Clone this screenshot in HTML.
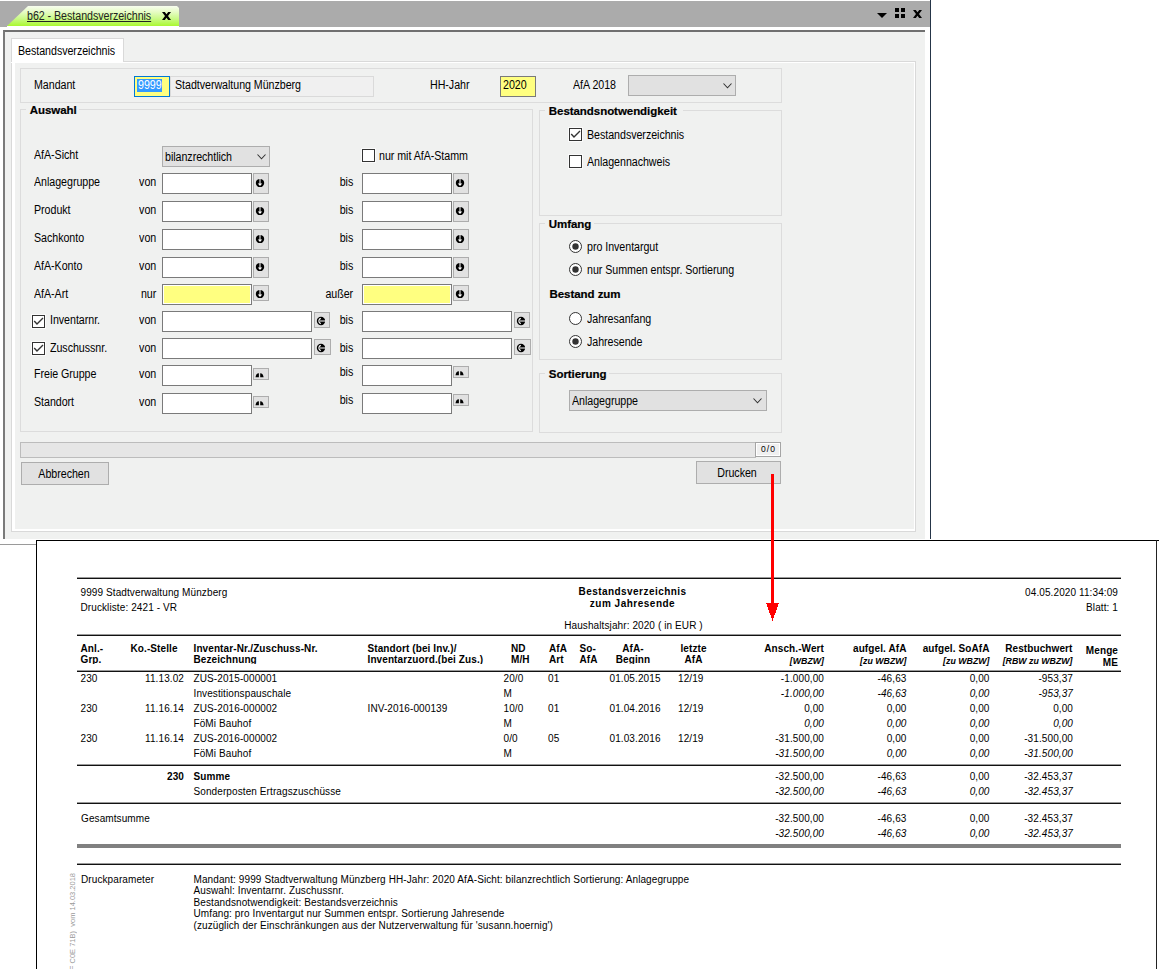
<!DOCTYPE html><html><head><meta charset="utf-8"><style>
*{margin:0;padding:0;box-sizing:border-box}
html,body{width:1159px;height:969px;overflow:hidden;background:#fff;position:relative}
body>div,body>svg{position:absolute}
.f{font:12px/13px "Liberation Sans",sans-serif;letter-spacing:-0.05px;transform:scaleX(0.89);color:#000;white-space:nowrap}
.fb{font:bold 11.5px/13px "Liberation Sans",sans-serif;letter-spacing:-0.05px;-webkit-text-stroke:0.2px #000;color:#000;white-space:nowrap}
.r{font:10px/12px "Liberation Sans",sans-serif;letter-spacing:0.1px;color:#000;white-space:nowrap}
.rb{font:bold 10px/12px "Liberation Sans",sans-serif;letter-spacing:0.1px;color:#000;white-space:nowrap}
.ri{font:italic 10px/12px "Liberation Sans",sans-serif;letter-spacing:0.1px;color:#000;white-space:nowrap}
.rs{font:bold italic 8.8px/10px "Liberation Sans",sans-serif;color:#000;white-space:nowrap}
.inp{background:#fff;border:1px solid #7a7a7a}
.btn{background:#e1e1e1;border:1px solid #adadad}
.grp{border:1px solid #dcdcdc}
</style></head><body>
<div style="left:0px;top:1px;width:930px;height:26px;background:#ababab"></div>
<svg style="left:0;top:0" width="200" height="30"><defs><linearGradient id="g" x1="0" y1="0" x2="0" y2="1"><stop offset="0" stop-color="#f8fdf0"/><stop offset="0.3" stop-color="#e6fcc4"/><stop offset="0.62" stop-color="#cbfa8a"/><stop offset="1" stop-color="#aaf830"/></linearGradient></defs><polygon points="7,26 28,6 177,6 179,8 179,26" fill="url(#g)"/></svg>
<div class="f" style="left:27px;top:10px;transform-origin:0 0;color:#222;text-decoration:underline">b62 - Bestandsverzeichnis</div>
<svg style="left:162px;top:12px" width="9" height="8"><polygon points="0,0 2.8,0 4.5,2.3 6.2,0 9,0 6,4 9,8 6.2,8 4.5,5.7 2.8,8 0,8 3,4" fill="#000"/></svg>
<svg style="left:876px;top:8px" width="50" height="12"><polygon points="1,5 11,5 6,10" fill="#000"/><rect x="19" y="0" width="4" height="4" fill="#000"/><rect x="25" y="0" width="4" height="4" fill="#000"/><rect x="19" y="6" width="4" height="4" fill="#000"/><rect x="25" y="6" width="4" height="4" fill="#000"/><polygon transform="translate(37,2)" points="0,0 2.8,0 4.5,2.3 6.2,0 9,0 6,4 9,8 6.2,8 4.5,5.7 2.8,8 0,8 3,4" fill="#000"/></svg>
<div style="left:930px;top:0px;width:1px;height:539px;background:#253548"></div>
<div style="left:7px;top:26px;width:172px;height:1px;background:#fff"></div>
<div style="left:3px;top:30px;width:922px;height:509px;background:#f0f1f0;border-left:2px solid #7a7a7a;border-top:2px solid #707070"></div>
<div style="left:0px;top:544px;width:36px;height:1px;background:#9a9a9a"></div>
<div style="left:11px;top:38px;width:113px;height:25px;background:#fff;border:1px solid #d9d9d9;border-bottom:none"></div>
<div style="left:11px;top:61px;width:905px;height:471px;border:1px solid #d9d9d9;border-top:none"></div>
<div style="left:123px;top:61px;width:793px;height:1px;background:#d9d9d9"></div>
<div style="left:12px;top:62px;width:903px;height:469px;border:solid #fff;border-width:1px 1px 2px 3px"></div>
<div style="left:12px;top:62px;width:111px;height:1px;background:#fff"></div>
<div class="f" style="left:17.8px;top:45.00px;transform-origin:0 0;">Bestandsverzeichnis</div>
<div style="left:11px;top:62px;width:1px;height:1px;background:#fff"></div>
<div style="left:20px;top:68px;width:762px;height:35px;"></div>
<div class="grp" style="left:20px;top:68px;width:762px;height:35px"></div>
<div class="f" style="left:34.3px;top:79.00px;transform-origin:0 0;">Mandant</div>
<div style="left:134px;top:76px;width:36px;height:21px;background:#ffff80;border:1px solid #0078d7"></div>
<div style="left:137px;top:79px;width:25px;height:13px;background:#3399ff"></div>
<div class="f" style="left:137.70000000000002px;top:79.00px;transform-origin:0 0;color:#fff">9999</div>
<div style="left:170px;top:76px;width:204px;height:21px;background:#f0f0f0;border:1px solid #dadada"></div>
<div class="f" style="left:174.5px;top:79.00px;transform-origin:0 0;">Stadtverwaltung Münzberg</div>
<div class="f" style="left:430.3px;top:79.00px;transform-origin:0 0;">HH-Jahr</div>
<div style="left:500px;top:76px;width:36px;height:21px;background:#ffff80;border:1px solid #7a7a7a"></div>
<div class="f" style="left:503.3px;top:79.00px;transform-origin:0 0;">2020</div>
<div class="f" style="left:572.8px;top:79.00px;transform-origin:0 0;">AfA 2018</div>
<div style="left:628px;top:75px;width:108px;height:21px;background:#e1e1e1;border:1px solid #adadad"></div>
<svg style="left:723px;top:83px" width="10" height="6"><path d="M0.5,0.5 L4.5,4.8 L8.5,0.5" fill="none" stroke="#333" stroke-width="1.1"/></svg>
<div class="grp" style="left:20px;top:109px;width:513px;height:323px"></div>
<div style="left:26px;top:108px;width:53px;height:3px;background:#f0f1f0"></div>
<div class="fb" style="left:29.8px;top:103.90px;transform-origin:0 0;">Auswahl</div>
<div class="grp" style="left:539px;top:110px;width:243px;height:106px"></div>
<div style="left:545px;top:109px;width:138px;height:3px;background:#f0f1f0"></div>
<div class="fb" style="left:548.8px;top:104.90px;transform-origin:0 0;">Bestandsnotwendigkeit</div>
<div class="grp" style="left:539px;top:223px;width:243px;height:137px"></div>
<div style="left:545px;top:222px;width:49px;height:3px;background:#f0f1f0"></div>
<div class="fb" style="left:548.8px;top:217.90px;transform-origin:0 0;">Umfang</div>
<div class="grp" style="left:539px;top:373px;width:243px;height:60px"></div>
<div style="left:545px;top:372px;width:64px;height:3px;background:#f0f1f0"></div>
<div class="fb" style="left:548.8px;top:367.90px;transform-origin:0 0;">Sortierung</div>
<div class="fb" style="left:549.5px;top:288.00px;transform-origin:0 0;">Bestand zum</div>
<div class="f" style="left:34.3px;top:149.00px;transform-origin:0 0;">AfA-Sicht</div>
<div style="left:162px;top:146px;width:108px;height:21px;background:#e1e1e1;border:1px solid #adadad"></div>
<div class="f" style="left:164.8px;top:151.00px;transform-origin:0 0;">bilanzrechtlich</div>
<svg style="left:257px;top:154px" width="10" height="6"><path d="M0.5,0.5 L4.5,4.8 L8.5,0.5" fill="none" stroke="#333" stroke-width="1.1"/></svg>
<svg style="left:361px;top:148px" width="15" height="15"><rect x="0.5" y="0.5" width="14" height="14" fill="none" stroke="#fff" stroke-width="1" opacity="0.7"/><rect x="1.5" y="1.5" width="12" height="12" fill="#fff" stroke="#333" stroke-width="1"/></svg>
<div class="f" style="left:378.7px;top:150.00px;transform-origin:0 0;">nur mit AfA-Stamm</div>
<div class="f" style="left:34.3px;top:176.00px;transform-origin:0 0;">Anlagegruppe</div>
<div class="f" style="right:1003px;top:176.00px;text-align:right;transform-origin:100% 0;">von</div>
<div class="f" style="right:805.5px;top:176.00px;text-align:right;transform-origin:100% 0;">bis</div>
<div style="left:162px;top:173px;width:90px;height:21px;background:#fff;border:1px solid #7a7a7a"></div>
<div style="left:362px;top:173px;width:90px;height:21px;background:#fff;border:1px solid #7a7a7a"></div>
<div style="left:253px;top:173px;width:16px;height:21px;background:#e1e1e1;border:1px solid #adadad"></div>
<div style="left:453px;top:173px;width:16px;height:21px;background:#e1e1e1;border:1px solid #adadad"></div>
<svg style="left:255px;top:178px" width="10" height="10"><ellipse cx="5" cy="5" rx="4.2" ry="4.1" fill="#000"/><rect x="4.5" y="0.5" width="1" height="5.5" fill="#fff"/><polygon points="2.8,5.6 7.2,5.6 5,7.9" fill="#fff"/></svg>
<svg style="left:455px;top:178px" width="10" height="10"><ellipse cx="5" cy="5" rx="4.2" ry="4.1" fill="#000"/><rect x="4.5" y="0.5" width="1" height="5.5" fill="#fff"/><polygon points="2.8,5.6 7.2,5.6 5,7.9" fill="#fff"/></svg>
<div class="f" style="left:34.3px;top:204.00px;transform-origin:0 0;">Produkt</div>
<div class="f" style="right:1003px;top:204.00px;text-align:right;transform-origin:100% 0;">von</div>
<div class="f" style="right:805.5px;top:204.00px;text-align:right;transform-origin:100% 0;">bis</div>
<div style="left:162px;top:201px;width:90px;height:21px;background:#fff;border:1px solid #7a7a7a"></div>
<div style="left:362px;top:201px;width:90px;height:21px;background:#fff;border:1px solid #7a7a7a"></div>
<div style="left:253px;top:201px;width:16px;height:21px;background:#e1e1e1;border:1px solid #adadad"></div>
<div style="left:453px;top:201px;width:16px;height:21px;background:#e1e1e1;border:1px solid #adadad"></div>
<svg style="left:255px;top:206px" width="10" height="10"><ellipse cx="5" cy="5" rx="4.2" ry="4.1" fill="#000"/><rect x="4.5" y="0.5" width="1" height="5.5" fill="#fff"/><polygon points="2.8,5.6 7.2,5.6 5,7.9" fill="#fff"/></svg>
<svg style="left:455px;top:206px" width="10" height="10"><ellipse cx="5" cy="5" rx="4.2" ry="4.1" fill="#000"/><rect x="4.5" y="0.5" width="1" height="5.5" fill="#fff"/><polygon points="2.8,5.6 7.2,5.6 5,7.9" fill="#fff"/></svg>
<div class="f" style="left:34.3px;top:232.00px;transform-origin:0 0;">Sachkonto</div>
<div class="f" style="right:1003px;top:232.00px;text-align:right;transform-origin:100% 0;">von</div>
<div class="f" style="right:805.5px;top:232.00px;text-align:right;transform-origin:100% 0;">bis</div>
<div style="left:162px;top:229px;width:90px;height:21px;background:#fff;border:1px solid #7a7a7a"></div>
<div style="left:362px;top:229px;width:90px;height:21px;background:#fff;border:1px solid #7a7a7a"></div>
<div style="left:253px;top:229px;width:16px;height:21px;background:#e1e1e1;border:1px solid #adadad"></div>
<div style="left:453px;top:229px;width:16px;height:21px;background:#e1e1e1;border:1px solid #adadad"></div>
<svg style="left:255px;top:234px" width="10" height="10"><ellipse cx="5" cy="5" rx="4.2" ry="4.1" fill="#000"/><rect x="4.5" y="0.5" width="1" height="5.5" fill="#fff"/><polygon points="2.8,5.6 7.2,5.6 5,7.9" fill="#fff"/></svg>
<svg style="left:455px;top:234px" width="10" height="10"><ellipse cx="5" cy="5" rx="4.2" ry="4.1" fill="#000"/><rect x="4.5" y="0.5" width="1" height="5.5" fill="#fff"/><polygon points="2.8,5.6 7.2,5.6 5,7.9" fill="#fff"/></svg>
<div class="f" style="left:34.3px;top:260.00px;transform-origin:0 0;">AfA-Konto</div>
<div class="f" style="right:1003px;top:260.00px;text-align:right;transform-origin:100% 0;">von</div>
<div class="f" style="right:805.5px;top:260.00px;text-align:right;transform-origin:100% 0;">bis</div>
<div style="left:162px;top:257px;width:90px;height:21px;background:#fff;border:1px solid #7a7a7a"></div>
<div style="left:362px;top:257px;width:90px;height:21px;background:#fff;border:1px solid #7a7a7a"></div>
<div style="left:253px;top:257px;width:16px;height:21px;background:#e1e1e1;border:1px solid #adadad"></div>
<div style="left:453px;top:257px;width:16px;height:21px;background:#e1e1e1;border:1px solid #adadad"></div>
<svg style="left:255px;top:262px" width="10" height="10"><ellipse cx="5" cy="5" rx="4.2" ry="4.1" fill="#000"/><rect x="4.5" y="0.5" width="1" height="5.5" fill="#fff"/><polygon points="2.8,5.6 7.2,5.6 5,7.9" fill="#fff"/></svg>
<svg style="left:455px;top:262px" width="10" height="10"><ellipse cx="5" cy="5" rx="4.2" ry="4.1" fill="#000"/><rect x="4.5" y="0.5" width="1" height="5.5" fill="#fff"/><polygon points="2.8,5.6 7.2,5.6 5,7.9" fill="#fff"/></svg>
<div class="f" style="left:34.3px;top:288.00px;transform-origin:0 0;">AfA-Art</div>
<div class="f" style="right:1003px;top:288.00px;text-align:right;transform-origin:100% 0;">nur</div>
<div class="f" style="right:805.5px;top:288.00px;text-align:right;transform-origin:100% 0;">außer</div>
<div style="left:162px;top:284px;width:90px;height:21px;background:#ffff80;border:1px solid #7a7a7a;box-shadow:inset 0 0 0 1px #fff"></div>
<div style="left:362px;top:284px;width:90px;height:21px;background:#ffff80;border:1px solid #7a7a7a;box-shadow:inset 0 0 0 1px #fff"></div>
<div style="left:253px;top:285px;width:16px;height:16px;background:#e1e1e1;border:1px solid #adadad"></div>
<div style="left:453px;top:285px;width:16px;height:16px;background:#e1e1e1;border:1px solid #adadad"></div>
<svg style="left:255px;top:289px" width="10" height="10"><ellipse cx="5" cy="5" rx="4.2" ry="4.1" fill="#000"/><rect x="4.5" y="0.5" width="1" height="5.5" fill="#fff"/><polygon points="2.8,5.6 7.2,5.6 5,7.9" fill="#fff"/></svg>
<svg style="left:455px;top:289px" width="10" height="10"><ellipse cx="5" cy="5" rx="4.2" ry="4.1" fill="#000"/><rect x="4.5" y="0.5" width="1" height="5.5" fill="#fff"/><polygon points="2.8,5.6 7.2,5.6 5,7.9" fill="#fff"/></svg>
<svg style="left:31px;top:314px" width="15" height="15"><rect x="0.5" y="0.5" width="14" height="14" fill="none" stroke="#fff" stroke-width="1" opacity="0.7"/><rect x="1.5" y="1.5" width="12" height="12" fill="#fff" stroke="#333" stroke-width="1"/><path d="M3.2,7 L6,10 L12,4" fill="none" stroke="#333" stroke-width="1.4"/></svg>
<div class="f" style="left:50.3px;top:314.00px;transform-origin:0 0;">Inventarnr.</div>
<div class="f" style="right:1003px;top:314.00px;text-align:right;transform-origin:100% 0;">von</div>
<div class="f" style="right:805.5px;top:314.00px;text-align:right;transform-origin:100% 0;">bis</div>
<div style="left:162px;top:311px;width:150px;height:21px;background:#fff;border:1px solid #7a7a7a"></div>
<div style="left:362px;top:311px;width:150px;height:21px;background:#fff;border:1px solid #7a7a7a"></div>
<div style="left:314px;top:312px;width:16px;height:16px;background:#e1e1e1;border:1px solid #adadad"></div>
<div style="left:514px;top:312px;width:16px;height:16px;background:#e1e1e1;border:1px solid #adadad"></div>
<svg style="left:316px;top:316px" width="10" height="10"><circle cx="5" cy="5" r="4.2" fill="#000"/><path d="M4.8,2.4 A2.7,2.7 0 0 0 4.8,7.6" fill="none" stroke="#fff" stroke-width="1.1"/><rect x="3.8" y="4.5" width="6" height="1" fill="#fff"/></svg>
<svg style="left:516px;top:316px" width="10" height="10"><circle cx="5" cy="5" r="4.2" fill="#000"/><path d="M4.8,2.4 A2.7,2.7 0 0 0 4.8,7.6" fill="none" stroke="#fff" stroke-width="1.1"/><rect x="3.8" y="4.5" width="6" height="1" fill="#fff"/></svg>
<svg style="left:31px;top:341px" width="15" height="15"><rect x="0.5" y="0.5" width="14" height="14" fill="none" stroke="#fff" stroke-width="1" opacity="0.7"/><rect x="1.5" y="1.5" width="12" height="12" fill="#fff" stroke="#333" stroke-width="1"/><path d="M3.2,7 L6,10 L12,4" fill="none" stroke="#333" stroke-width="1.4"/></svg>
<div class="f" style="left:50.3px;top:342.00px;transform-origin:0 0;">Zuschussnr.</div>
<div class="f" style="right:1003px;top:342.00px;text-align:right;transform-origin:100% 0;">von</div>
<div class="f" style="right:805.5px;top:342.00px;text-align:right;transform-origin:100% 0;">bis</div>
<div style="left:162px;top:338px;width:150px;height:21px;background:#fff;border:1px solid #7a7a7a"></div>
<div style="left:362px;top:338px;width:150px;height:21px;background:#fff;border:1px solid #7a7a7a"></div>
<div style="left:314px;top:339px;width:17px;height:16px;background:#e1e1e1;border:1px solid #adadad"></div>
<div style="left:514px;top:339px;width:17px;height:16px;background:#e1e1e1;border:1px solid #adadad"></div>
<svg style="left:316px;top:343px" width="10" height="10"><circle cx="5" cy="5" r="4.2" fill="#000"/><path d="M4.8,2.4 A2.7,2.7 0 0 0 4.8,7.6" fill="none" stroke="#fff" stroke-width="1.1"/><rect x="3.8" y="4.5" width="6" height="1" fill="#fff"/></svg>
<svg style="left:516px;top:343px" width="10" height="10"><circle cx="5" cy="5" r="4.2" fill="#000"/><path d="M4.8,2.4 A2.7,2.7 0 0 0 4.8,7.6" fill="none" stroke="#fff" stroke-width="1.1"/><rect x="3.8" y="4.5" width="6" height="1" fill="#fff"/></svg>
<div class="f" style="left:34.3px;top:368.00px;transform-origin:0 0;">Freie Gruppe</div>
<div class="f" style="right:1003px;top:368.00px;text-align:right;transform-origin:100% 0;">von</div>
<div class="f" style="right:805.5px;top:366.00px;text-align:right;transform-origin:100% 0;">bis</div>
<div style="left:162px;top:365px;width:90px;height:21px;background:#fff;border:1px solid #7a7a7a"></div>
<div style="left:362px;top:365px;width:90px;height:21px;background:#fff;border:1px solid #7a7a7a"></div>
<div style="left:253px;top:368px;width:16px;height:12px;background:#e1e1e1;border:1px solid #adadad"></div>
<div style="left:453px;top:366px;width:16px;height:12px;background:#e1e1e1;border:1px solid #adadad"></div>
<svg style="left:255.2px;top:372.6px" width="10" height="6"><path d="M0.5,4.3 Q0.9,0.4 3.9,0.2 L3.9,4.3 Z M5.2,0.2 Q8.2,0.4 8.6,4.3 L5.2,4.3 Z" fill="#000"/></svg>
<svg style="left:455.2px;top:370.6px" width="10" height="6"><path d="M0.5,4.3 Q0.9,0.4 3.9,0.2 L3.9,4.3 Z M5.2,0.2 Q8.2,0.4 8.6,4.3 L5.2,4.3 Z" fill="#000"/></svg>
<div class="f" style="left:34.3px;top:396.00px;transform-origin:0 0;">Standort</div>
<div class="f" style="right:1003px;top:396.00px;text-align:right;transform-origin:100% 0;">von</div>
<div class="f" style="right:805.5px;top:394.00px;text-align:right;transform-origin:100% 0;">bis</div>
<div style="left:162px;top:393px;width:90px;height:21px;background:#fff;border:1px solid #7a7a7a"></div>
<div style="left:362px;top:393px;width:90px;height:21px;background:#fff;border:1px solid #7a7a7a"></div>
<div style="left:253px;top:396px;width:16px;height:12px;background:#e1e1e1;border:1px solid #adadad"></div>
<div style="left:453px;top:394px;width:16px;height:12px;background:#e1e1e1;border:1px solid #adadad"></div>
<svg style="left:255.2px;top:400.6px" width="10" height="6"><path d="M0.5,4.3 Q0.9,0.4 3.9,0.2 L3.9,4.3 Z M5.2,0.2 Q8.2,0.4 8.6,4.3 L5.2,4.3 Z" fill="#000"/></svg>
<svg style="left:455.2px;top:398.6px" width="10" height="6"><path d="M0.5,4.3 Q0.9,0.4 3.9,0.2 L3.9,4.3 Z M5.2,0.2 Q8.2,0.4 8.6,4.3 L5.2,4.3 Z" fill="#000"/></svg>
<svg style="left:568px;top:127px" width="15" height="15"><rect x="0.5" y="0.5" width="14" height="14" fill="none" stroke="#fff" stroke-width="1" opacity="0.7"/><rect x="1.5" y="1.5" width="12" height="12" fill="#fff" stroke="#333" stroke-width="1"/><path d="M3.2,7 L6,10 L12,4" fill="none" stroke="#333" stroke-width="1.4"/></svg>
<div class="f" style="left:587.3px;top:129.00px;transform-origin:0 0;">Bestandsverzeichnis</div>
<svg style="left:568px;top:154px" width="15" height="15"><rect x="0.5" y="0.5" width="14" height="14" fill="none" stroke="#fff" stroke-width="1" opacity="0.7"/><rect x="1.5" y="1.5" width="12" height="12" fill="#fff" stroke="#333" stroke-width="1"/></svg>
<div class="f" style="left:587.3px;top:156.00px;transform-origin:0 0;">Anlagennachweis</div>
<svg style="left:569px;top:240px" width="13" height="13"><circle cx="6.5" cy="6.5" r="6" fill="#fff" stroke="#333" stroke-width="1"/><circle cx="6.5" cy="6.5" r="3.2" fill="#333"/></svg>
<div class="f" style="left:586.8px;top:241.00px;transform-origin:0 0;">pro Inventargut</div>
<svg style="left:569px;top:263px" width="13" height="13"><circle cx="6.5" cy="6.5" r="6" fill="#fff" stroke="#333" stroke-width="1"/><circle cx="6.5" cy="6.5" r="3.2" fill="#333"/></svg>
<div class="f" style="left:586.8px;top:264.00px;transform-origin:0 0;">nur Summen entspr. Sortierung</div>
<svg style="left:569px;top:312px" width="13" height="13"><circle cx="6.5" cy="6.5" r="6" fill="#fff" stroke="#333" stroke-width="1"/></svg>
<div class="f" style="left:586.8px;top:313.00px;transform-origin:0 0;">Jahresanfang</div>
<svg style="left:569px;top:335px" width="13" height="13"><circle cx="6.5" cy="6.5" r="6" fill="#fff" stroke="#333" stroke-width="1"/><circle cx="6.5" cy="6.5" r="3.2" fill="#333"/></svg>
<div class="f" style="left:586.8px;top:336.00px;transform-origin:0 0;">Jahresende</div>
<div style="left:569px;top:390px;width:198px;height:21px;background:#e1e1e1;border:1px solid #adadad"></div>
<div class="f" style="left:572.3px;top:395.00px;transform-origin:0 0;">Anlagegruppe</div>
<svg style="left:753px;top:398px" width="10" height="6"><path d="M0.5,0.5 L4.5,4.8 L8.5,0.5" fill="none" stroke="#333" stroke-width="1.1"/></svg>
<div style="left:20px;top:442px;width:736px;height:16px;background:#e6e6e6;border:1px solid #bcbcbc"></div>
<div style="left:755px;top:442px;width:26px;height:15px;background:#f0f0f0;border:1px solid #a5a5a5;box-shadow:inset 0 0 0 1px #fff"></div>
<div style="left:755px;top:443px;width:26px;text-align:center;font:8.5px/12px &quot;Liberation Sans&quot;,sans-serif;letter-spacing:1px;text-indent:1px;color:#000">0/0</div>
<div style="left:21px;top:462px;width:88px;height:23px;background:#e1e1e1;border:1px solid #adadad"></div>
<div class="f" style="left:-136.5px;width:400px;top:468.00px;text-align:center;transform-origin:50% 0;">Abbrechen</div>
<div style="left:696px;top:461px;width:85px;height:23px;background:#e1e1e1;border:1px solid #adadad"></div>
<div class="f" style="left:536.5px;width:400px;top:467.00px;text-align:center;transform-origin:50% 0;">Drucken</div>
<div style="left:36px;top:540px;width:1123px;height:429px;background:#fff;border-left:1px solid #000;border-top:1px solid #000"></div>
<div style="left:1156px;top:540px;width:1px;height:429px;background:#222"></div>
<div style="left:77px;top:577px;width:1044px;height:1px;background:#9a9a9a"></div>
<div style="left:77px;top:578px;width:1044px;height:1px;background:#111"></div>
<div class="r" style="left:80.5px;top:587.00px;transform-origin:0 0;">9999 Stadtverwaltung Münzberg</div>
<div class="r" style="left:80.5px;top:602.00px;transform-origin:0 0;">Druckliste: 2421 - VR</div>
<div class="rb" style="left:432.5px;width:400px;top:586.00px;text-align:center;transform-origin:50% 0;letter-spacing:0.45px">Bestandsverzeichnis</div>
<div class="rb" style="left:432.5px;width:400px;top:597.50px;text-align:center;transform-origin:50% 0;letter-spacing:0.5px">zum Jahresende</div>
<div class="r" style="left:433.5px;width:400px;top:619.50px;text-align:center;transform-origin:50% 0;">Haushaltsjahr: 2020 ( in EUR )</div>
<div class="r" style="right:41px;top:587.00px;text-align:right;transform-origin:100% 0;">04.05.2020 11:34:09</div>
<div class="r" style="right:41px;top:602.00px;text-align:right;transform-origin:100% 0;">Blatt: 1</div>
<div style="left:77px;top:634px;width:1044px;height:1px;background:#9a9a9a"></div>
<div style="left:77px;top:635px;width:1044px;height:1px;background:#111"></div>
<div class="rb" style="left:80.5px;top:642.50px;transform-origin:0 0;">Anl.-</div>
<div class="rb" style="left:80.5px;top:653.50px;transform-origin:0 0;">Grp.</div>
<div class="rb" style="left:130.5px;top:642.50px;transform-origin:0 0;">Ko.-Stelle</div>
<div class="rb" style="left:193.5px;top:642.50px;transform-origin:0 0;">Inventar-Nr./Zuschuss-Nr.</div>
<div class="rb" style="left:193.5px;top:653.50px;transform-origin:0 0;">Bezeichnung</div>
<div class="rb" style="left:367.5px;top:642.50px;transform-origin:0 0;">Standort (bei Inv.)/</div>
<div class="rb" style="left:367.5px;top:653.50px;transform-origin:0 0;">Inventarzuord.(bei Zus.)</div>
<div class="rb" style="left:511px;top:642.50px;transform-origin:0 0;">ND</div>
<div class="rb" style="left:511px;top:653.50px;transform-origin:0 0;">M/H</div>
<div class="rb" style="left:549px;top:642.50px;transform-origin:0 0;">AfA</div>
<div class="rb" style="left:549px;top:653.50px;transform-origin:0 0;">Art</div>
<div class="rb" style="left:579.5px;top:642.50px;transform-origin:0 0;">So-</div>
<div class="rb" style="left:579.5px;top:653.50px;transform-origin:0 0;">AfA</div>
<div class="rb" style="left:433px;width:400px;top:642.50px;text-align:center;transform-origin:50% 0;">AfA-</div>
<div class="rb" style="left:433px;width:400px;top:653.50px;text-align:center;transform-origin:50% 0;">Beginn</div>
<div class="rb" style="left:493.5px;width:400px;top:642.50px;text-align:center;transform-origin:50% 0;">letzte</div>
<div class="rb" style="left:493.5px;width:400px;top:653.50px;text-align:center;transform-origin:50% 0;">AfA</div>
<div class="rb" style="right:335px;top:642.50px;text-align:right;transform-origin:100% 0;">Ansch.-Wert</div>
<div class="rs" style="right:335px;top:655.50px;text-align:right;transform-origin:100% 0;">[WBZW]</div>
<div class="rb" style="right:252.5px;top:642.50px;text-align:right;transform-origin:100% 0;">aufgel. AfA</div>
<div class="rs" style="right:252.5px;top:655.50px;text-align:right;transform-origin:100% 0;">[zu WBZW]</div>
<div class="rb" style="right:169.5px;top:642.50px;text-align:right;transform-origin:100% 0;">aufgel. SoAfA</div>
<div class="rs" style="right:169.5px;top:655.50px;text-align:right;transform-origin:100% 0;">[zu WBZW]</div>
<div class="rb" style="right:86.5px;top:642.50px;text-align:right;transform-origin:100% 0;">Restbuchwert</div>
<div class="rs" style="right:86.5px;top:655.50px;text-align:right;transform-origin:100% 0;">[RBW zu WBZW]</div>
<div class="rb" style="right:41px;top:644.50px;text-align:right;transform-origin:100% 0;">Menge</div>
<div class="rb" style="right:41px;top:656.50px;text-align:right;transform-origin:100% 0;">ME</div>
<div style="left:77px;top:670px;width:1044px;height:1px;background:#9a9a9a"></div>
<div style="left:77px;top:671px;width:1044px;height:1px;background:#111"></div>
<div style="left:77px;top:664px;width:663px;height:5px;background:#fff"></div>
<div class="r" style="left:80.5px;top:672.50px;transform-origin:0 0;">230</div>
<div class="r" style="right:975px;top:672.50px;text-align:right;transform-origin:100% 0;">11.13.02</div>
<div class="r" style="left:193.5px;top:672.50px;transform-origin:0 0;">ZUS-2015-000001</div>
<div class="r" style="left:503.5px;top:672.50px;transform-origin:0 0;">20/0</div>
<div class="r" style="left:548px;top:672.50px;transform-origin:0 0;">01</div>
<div class="r" style="left:609.5px;top:672.50px;transform-origin:0 0;">01.05.2015</div>
<div class="r" style="left:678px;top:672.50px;transform-origin:0 0;">12/19</div>
<div class="r" style="right:335px;top:672.50px;text-align:right;transform-origin:100% 0;">-1.000,00</div>
<div class="r" style="right:252.5px;top:672.50px;text-align:right;transform-origin:100% 0;">-46,63</div>
<div class="r" style="right:169.5px;top:672.50px;text-align:right;transform-origin:100% 0;">0,00</div>
<div class="r" style="right:86px;top:672.50px;text-align:right;transform-origin:100% 0;">-953,37</div>
<div class="r" style="left:193.5px;top:687.60px;transform-origin:0 0;">Investitionspauschale</div>
<div class="r" style="left:503.5px;top:687.60px;transform-origin:0 0;">M</div>
<div class="ri" style="right:335px;top:687.60px;text-align:right;transform-origin:100% 0;">-1.000,00</div>
<div class="ri" style="right:252.5px;top:687.60px;text-align:right;transform-origin:100% 0;">-46,63</div>
<div class="ri" style="right:169.5px;top:687.60px;text-align:right;transform-origin:100% 0;">0,00</div>
<div class="ri" style="right:86px;top:687.60px;text-align:right;transform-origin:100% 0;">-953,37</div>
<div class="r" style="left:80.5px;top:702.70px;transform-origin:0 0;">230</div>
<div class="r" style="right:975px;top:702.70px;text-align:right;transform-origin:100% 0;">11.16.14</div>
<div class="r" style="left:193.5px;top:702.70px;transform-origin:0 0;">ZUS-2016-000002</div>
<div class="r" style="left:367.5px;top:702.70px;transform-origin:0 0;">INV-2016-000139</div>
<div class="r" style="left:503.5px;top:702.70px;transform-origin:0 0;">10/0</div>
<div class="r" style="left:548px;top:702.70px;transform-origin:0 0;">01</div>
<div class="r" style="left:609.5px;top:702.70px;transform-origin:0 0;">01.04.2016</div>
<div class="r" style="left:678px;top:702.70px;transform-origin:0 0;">12/19</div>
<div class="r" style="right:335px;top:702.70px;text-align:right;transform-origin:100% 0;">0,00</div>
<div class="r" style="right:252.5px;top:702.70px;text-align:right;transform-origin:100% 0;">0,00</div>
<div class="r" style="right:169.5px;top:702.70px;text-align:right;transform-origin:100% 0;">0,00</div>
<div class="r" style="right:86px;top:702.70px;text-align:right;transform-origin:100% 0;">0,00</div>
<div class="r" style="left:193.5px;top:717.80px;transform-origin:0 0;">FöMi Bauhof</div>
<div class="r" style="left:503.5px;top:717.80px;transform-origin:0 0;">M</div>
<div class="ri" style="right:335px;top:717.80px;text-align:right;transform-origin:100% 0;">0,00</div>
<div class="ri" style="right:252.5px;top:717.80px;text-align:right;transform-origin:100% 0;">0,00</div>
<div class="ri" style="right:169.5px;top:717.80px;text-align:right;transform-origin:100% 0;">0,00</div>
<div class="ri" style="right:86px;top:717.80px;text-align:right;transform-origin:100% 0;">0,00</div>
<div class="r" style="left:80.5px;top:732.90px;transform-origin:0 0;">230</div>
<div class="r" style="right:975px;top:732.90px;text-align:right;transform-origin:100% 0;">11.16.14</div>
<div class="r" style="left:193.5px;top:732.90px;transform-origin:0 0;">ZUS-2016-000002</div>
<div class="r" style="left:503.5px;top:732.90px;transform-origin:0 0;">0/0</div>
<div class="r" style="left:548px;top:732.90px;transform-origin:0 0;">05</div>
<div class="r" style="left:609.5px;top:732.90px;transform-origin:0 0;">01.03.2016</div>
<div class="r" style="left:678px;top:732.90px;transform-origin:0 0;">12/19</div>
<div class="r" style="right:335px;top:732.90px;text-align:right;transform-origin:100% 0;">-31.500,00</div>
<div class="r" style="right:252.5px;top:732.90px;text-align:right;transform-origin:100% 0;">0,00</div>
<div class="r" style="right:169.5px;top:732.90px;text-align:right;transform-origin:100% 0;">0,00</div>
<div class="r" style="right:86px;top:732.90px;text-align:right;transform-origin:100% 0;">-31.500,00</div>
<div class="r" style="left:193.5px;top:748.00px;transform-origin:0 0;">FöMi Bauhof</div>
<div class="r" style="left:503.5px;top:748.00px;transform-origin:0 0;">M</div>
<div class="ri" style="right:335px;top:748.00px;text-align:right;transform-origin:100% 0;">-31.500,00</div>
<div class="ri" style="right:252.5px;top:748.00px;text-align:right;transform-origin:100% 0;">0,00</div>
<div class="ri" style="right:169.5px;top:748.00px;text-align:right;transform-origin:100% 0;">0,00</div>
<div class="ri" style="right:86px;top:748.00px;text-align:right;transform-origin:100% 0;">-31.500,00</div>
<div style="left:77px;top:764px;width:1044px;height:1px;background:#9a9a9a"></div>
<div style="left:77px;top:765px;width:1044px;height:1px;background:#111"></div>
<div class="rb" style="right:975px;top:770.50px;text-align:right;transform-origin:100% 0;">230</div>
<div class="rb" style="left:193.5px;top:770.50px;transform-origin:0 0;">Summe</div>
<div class="r" style="left:193.5px;top:785.50px;transform-origin:0 0;">Sonderposten Ertragszuschüsse</div>
<div class="r" style="right:335px;top:770.50px;text-align:right;transform-origin:100% 0;">-32.500,00</div>
<div class="ri" style="right:335px;top:785.50px;text-align:right;transform-origin:100% 0;">-32.500,00</div>
<div class="r" style="right:252.5px;top:770.50px;text-align:right;transform-origin:100% 0;">-46,63</div>
<div class="ri" style="right:252.5px;top:785.50px;text-align:right;transform-origin:100% 0;">-46,63</div>
<div class="r" style="right:169.5px;top:770.50px;text-align:right;transform-origin:100% 0;">0,00</div>
<div class="ri" style="right:169.5px;top:785.50px;text-align:right;transform-origin:100% 0;">0,00</div>
<div class="r" style="right:86px;top:770.50px;text-align:right;transform-origin:100% 0;">-32.453,37</div>
<div class="ri" style="right:86px;top:785.50px;text-align:right;transform-origin:100% 0;">-32.453,37</div>
<div style="left:77px;top:802px;width:1044px;height:1px;background:#9a9a9a"></div>
<div style="left:77px;top:803px;width:1044px;height:1px;background:#111"></div>
<div class="r" style="left:81px;top:813.00px;transform-origin:0 0;">Gesamtsumme</div>
<div class="r" style="right:335px;top:812.50px;text-align:right;transform-origin:100% 0;">-32.500,00</div>
<div class="ri" style="right:335px;top:828.00px;text-align:right;transform-origin:100% 0;">-32.500,00</div>
<div class="r" style="right:252.5px;top:812.50px;text-align:right;transform-origin:100% 0;">-46,63</div>
<div class="ri" style="right:252.5px;top:828.00px;text-align:right;transform-origin:100% 0;">-46,63</div>
<div class="r" style="right:169.5px;top:812.50px;text-align:right;transform-origin:100% 0;">0,00</div>
<div class="ri" style="right:169.5px;top:828.00px;text-align:right;transform-origin:100% 0;">0,00</div>
<div class="r" style="right:86px;top:812.50px;text-align:right;transform-origin:100% 0;">-32.453,37</div>
<div class="ri" style="right:86px;top:828.00px;text-align:right;transform-origin:100% 0;">-32.453,37</div>
<div style="left:77px;top:844px;width:1044px;height:4px;background:#808080"></div>
<div style="left:77px;top:863px;width:1044px;height:1px;background:#9a9a9a"></div>
<div style="left:77px;top:864px;width:1044px;height:1px;background:#111"></div>
<div class="r" style="left:81px;top:873.50px;transform-origin:0 0;">Druckparameter</div>
<div class="r" style="left:193.5px;top:873.5px;font-size:10px;line-height:12px">Mandant: 9999 Stadtverwaltung Münzberg HH-Jahr: 2020 AfA-Sicht: bilanzrechtlich Sortierung: Anlagegruppe</div>
<div class="r" style="left:193.5px;top:885.1px;font-size:10px;line-height:12px">Auswahl: Inventarnr. Zuschussnr.</div>
<div class="r" style="left:193.5px;top:896.7px;font-size:10px;line-height:12px">Bestandsnotwendigkeit: Bestandsverzeichnis</div>
<div class="r" style="left:193.5px;top:908.3px;font-size:10px;line-height:12px">Umfang: pro Inventargut nur Summen entspr. Sortierung Jahresende</div>
<div class="r" style="left:193.5px;top:919.9px;font-size:10px;line-height:12px">(zuzüglich der Einschränkungen aus der Nutzerverwaltung für 'susann.hoernig')</div>
<div style="left:68px;top:873px;width:9px;height:100px;overflow:hidden"><div style="position:absolute;left:0;top:0;width:120px;font:7.5px/9px &quot;Liberation Sans&quot;,sans-serif;color:#999;transform-origin:0 0;transform:translate(0px,120px) rotate(-90deg);white-space:nowrap;text-align:right">(F C0E 71B)&nbsp; vom 14.03.2018</div></div>
<div style="left:771px;top:474px;width:3px;height:130px;background:#f00"></div>
<svg style="left:765px;top:602px" width="15" height="20"><polygon points="1,1 14,1 7.5,19" fill="#f00" shape-rendering="crispEdges"/></svg>
</body></html>
